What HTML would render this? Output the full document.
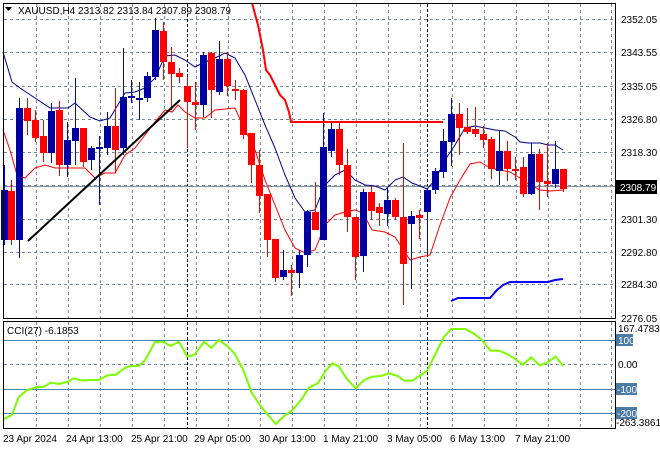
<!DOCTYPE html>
<html><head><meta charset="utf-8"><style>
html,body{margin:0;padding:0;background:#fff;}
svg{display:block;font-family:"Liberation Sans",sans-serif;}
</style></head><body>
<svg width="660" height="450" xmlns="http://www.w3.org/2000/svg">
<rect width="660" height="450" fill="#fff"/>
<!-- grid -->
<g stroke="#778899" stroke-width="1" stroke-dasharray="3,3" fill="none">
<path d="M4 19.5H615M4 52.5H615M4 86.5H615M4 119.5H615M4 152.5H615M4 185.5H615M4 219.5H615M4 252.5H615M4 284.5H615"/>
<path d="M36.5 4V318M68.5 4V318M100.5 4V318M132.5 4V318M164.5 4V318M196.5 4V318M228.5 4V318M260.5 4V318M292.5 4V318M324.5 4V318M356.5 4V318M388.5 4V318M420.5 4V318M452.5 4V318M484.5 4V318M516.5 4V318M548.5 4V318M580.5 4V318M611.5 4V318"/>
<path d="M36.5 322V428M68.5 322V428M100.5 322V428M132.5 322V428M164.5 322V428M196.5 322V428M228.5 322V428M260.5 322V428M292.5 322V428M324.5 322V428M356.5 322V428M388.5 322V428M420.5 322V428M452.5 322V428M484.5 322V428M516.5 322V428M548.5 322V428M580.5 322V428M611.5 322V428"/>
<path d="M4 364.5H615"/>
</g>
<g stroke="#000" stroke-dasharray="3,2"><path d="M187.5 4V318M427.5 4V318M187.5 322V428M427.5 322V428"/></g>
<!-- CCI levels -->
<g stroke="#4682b4"><path d="M4 340.5H615M4 389.5H615M4 413.5H615"/></g>
<!-- current price -->
<path d="M4 186.5H615" stroke="#8090a0"/>
<!-- bands -->
<polyline fill="none" stroke="#000080" stroke-width="1" points="3,52 12,82 20,88 35,98 50,108 68,108 75,103 90,117 100,121 110,118 125,93 135,92 145,88 155,78 165,56 175,55 185,60 195,67 205,62 215,58 225,53 235,58 245,75 255,100 265,125 275,148 285,175 295,198 305,212 315,210 325,185 335,175 345,170 355,180 365,185 375,186 385,190 395,180 403,177 412,183 420,186 427,189 435,180 445,160 455,145 465,128 475,126 485,128 495,130 505,131 515,137 520,142 528,143 540,143 548,145 555,145 563,150"/>
<polyline fill="none" stroke="#ff0000" stroke-width="1" points="3,130 10,150 17,175 25,178 35,168 45,165 55,168 65,168 75,168 85,168 95,178 105,173 115,173 125,155 135,148 145,135 155,122 165,110 172,112 178,105 185,112 195,118 205,118 215,110 235,108 245,130 255,150 265,180 275,205 285,230 295,248 305,253 315,250 325,225 335,215 345,212 355,210 363,213 372,230 385,232 395,237 410,260 420,257 430,255 440,225 450,198 460,180 470,164 480,162 490,168 500,170 510,172 520,178 530,185 540,190 550,191 563,190"/>
<!-- candles -->
<g id="c"></g>
<g stroke-width="1">
<g stroke="#0000ff" fill="#0000a0">
<path d="M4.5 165V245M19.5 98V258M51.5 103V163M67.5 122V177M75.5 78V165M91.5 146V170M99.5 136V205M107.5 112V155M123.5 48V155M131.5 80V103M139.5 82V120M147.5 72V102M155.5 18V80M203.5 52V117M219.5 41V95M283.5 250V280M299.5 250V288M307.5 210V267M323.5 113V240M331.5 122V157M363.5 189V272M387.5 188V226M411.5 211V289M427.5 188V255M435.5 168V194M443.5 129V178M451.5 98V166M499.5 130V185M531.5 143V195M555.5 141V188"/>
<g stroke="none">
<rect x="1" y="190" width="7" height="50"/><rect x="16" y="108" width="7" height="132"/><rect x="48" y="111" width="7" height="42"/><rect x="64" y="140" width="7" height="25"/><rect x="72" y="128" width="7" height="13"/><rect x="88" y="148" width="7" height="12"/><rect x="96" y="147" width="7" height="2"/><rect x="104" y="126" width="7" height="22"/><rect x="120" y="97" width="7" height="51"/><rect x="128" y="96" width="7" height="2"/><rect x="136" y="98" width="7" height="2"/><rect x="144" y="76" width="7" height="22"/><rect x="152" y="30" width="7" height="47"/><rect x="200" y="55" width="7" height="50"/><rect x="216" y="59" width="7" height="33"/><rect x="280" y="270" width="7" height="7"/><rect x="296" y="255" width="7" height="18"/><rect x="304" y="212" width="7" height="43"/><rect x="320" y="147" width="7" height="93"/><rect x="328" y="129" width="7" height="22"/><rect x="360" y="192" width="7" height="64"/><rect x="384" y="200" width="7" height="14"/><rect x="408" y="216" width="7" height="8"/><rect x="424" y="190" width="7" height="22"/><rect x="432" y="171" width="7" height="19"/><rect x="440" y="141" width="7" height="31"/><rect x="448" y="114" width="7" height="28"/><rect x="496" y="151" width="7" height="20"/><rect x="528" y="154" width="7" height="40"/><rect x="552" y="169" width="7" height="15"/>
</g></g>
<g stroke="#ff0000" fill="#ff0000">
<path d="M11.5 180V245M27.5 98V135M35.5 110V142M43.5 120V162M59.5 101V176M83.5 128V167M115.5 88V173M163.5 22V80M171.5 47V110M179.5 68V83M187.5 77V148M195.5 82V130M211.5 52V118M227.5 52V96M235.5 80V100M243.5 89V139M251.5 133V183M259.5 150V213M267.5 194V257M275.5 239V282M291.5 265V296M315.5 182V230M339.5 123V175M347.5 149V232M355.5 217V280M371.5 186V220M379.5 203V226M395.5 198V220M403.5 143V305M419.5 210V239M459.5 103V155M467.5 108V134M475.5 107V137M483.5 126V148M491.5 137V179M507.5 141V181M515.5 157V180M523.5 157V197M539.5 149V210M547.5 143V197M563.5 169V192"/>
<g stroke="none">
<rect x="8" y="191" width="7" height="49"/><rect x="24" y="108" width="7" height="13"/><rect x="32" y="120" width="7" height="18"/><rect x="40" y="136" width="7" height="17"/><rect x="56" y="110" width="7" height="55"/><rect x="80" y="128" width="7" height="34"/><rect x="112" y="126" width="7" height="24"/><rect x="160" y="31" width="7" height="31"/><rect x="168" y="62" width="7" height="12"/><rect x="176" y="73" width="7" height="4"/><rect x="184" y="86" width="7" height="16"/><rect x="192" y="102" width="7" height="3"/><rect x="208" y="53" width="7" height="37"/><rect x="224" y="59" width="7" height="27"/><rect x="232" y="89" width="7" height="2"/><rect x="240" y="90" width="7" height="45"/><rect x="248" y="133" width="7" height="32"/><rect x="256" y="165" width="7" height="31"/><rect x="264" y="194" width="7" height="46"/><rect x="272" y="239" width="7" height="39"/><rect x="288" y="270" width="7" height="3"/><rect x="312" y="212" width="7" height="18"/><rect x="336" y="129" width="7" height="36"/><rect x="344" y="165" width="7" height="52"/><rect x="352" y="217" width="7" height="40"/><rect x="368" y="192" width="7" height="19"/><rect x="376" y="207" width="7" height="6"/><rect x="392" y="200" width="7" height="17"/><rect x="400" y="217" width="7" height="47"/><rect x="416" y="215" width="7" height="3"/><rect x="456" y="114" width="7" height="14"/><rect x="464" y="127" width="7" height="5"/><rect x="472" y="129" width="7" height="5"/><rect x="480" y="134" width="7" height="6"/><rect x="488" y="139" width="7" height="30"/><rect x="504" y="151" width="7" height="18"/><rect x="512" y="169" width="7" height="2"/><rect x="520" y="167" width="7" height="27"/><rect x="536" y="154" width="7" height="28"/><rect x="544" y="181" width="7" height="3"/><rect x="560" y="169" width="7" height="20"/>
</g></g>
</g>
<!-- thick lines -->
<polyline fill="none" stroke="#ff0000" stroke-width="2" points="252,3 258,25 263,50 266,70 270,75 275,85 280,95 285,100 289,112 291,122 443,122"/>
<polyline fill="none" stroke="#0000ff" stroke-width="2" points="451,301 458,298 490,298 497,290 503,285 510,282 548,282 555,280 563,279"/>
<line x1="28" y1="241" x2="180" y2="100" stroke="#000" stroke-width="2"/>
<!-- CCI -->
<g transform="translate(0,300) scale(0.42092,0.33333)">
<polyline fill="none" stroke="#7cfc00" stroke-width="2" vector-effect="non-scaling-stroke" points="8,358 28,345 45,290 65,270 85,262 105,260 120,248 140,252 160,246 175,235 195,242 215,240 235,240 255,226 275,224 295,205 310,198 330,198 345,180 368,126 388,126 405,138 425,125 445,170 462,164 485,125 502,144 520,120 540,138 558,162 578,210 598,278 620,320 640,350 655,372 675,348 695,330 715,300 735,262 755,250 775,210 790,190 805,200 825,238 845,265 865,240 885,230 905,228 925,220 945,228 960,242 980,242 1000,225 1015,212 1035,160 1055,110 1072,87 1090,87 1105,87 1125,100 1145,120 1165,152 1185,152 1205,162 1225,178 1242,194 1262,172 1282,196 1300,188 1320,170 1338,198"/>
</g>
<!-- frames -->
<g stroke="#000" fill="none"><rect x="3.5" y="3.5" width="612" height="315"/><rect x="3.5" y="321.5" width="612" height="107"/></g>
<!-- header text -->
<path d="M5 7L12 7L8.5 11Z" fill="#000"/>
<text x="18" y="14" font-size="10" fill="#000">XAUUSD,H4  2313.82 2313.84 2307.89 2308.79</text>
<text x="7" y="334" font-size="10" fill="#000">CCI(27) -6.1853</text>
<!-- price axis -->
<g font-size="10" fill="#000">
<text x="621" y="23">2352.05</text><text x="621" y="56">2343.55</text><text x="621" y="90">2335.05</text><text x="621" y="123">2326.80</text><text x="621" y="156">2318.30</text><text x="621" y="189">2309.80</text><text x="621" y="223">2301.30</text><text x="621" y="256">2292.80</text><text x="621" y="288">2284.30</text><text x="621" y="322">2276.05</text>
</g>
<rect x="616" y="180" width="41" height="14" fill="#000"/>
<text x="620" y="191" font-size="10" fill="#fff">2308.79</text>
<g font-size="10">
<text x="618" y="332" fill="#000">167.4783</text>
<rect x="616" y="334" width="17" height="12" fill="#4a7aa5"/><text x="618" y="344" fill="#fff">100</text>
<text x="618" y="368" fill="#000">0.00</text>
<rect x="616" y="383" width="21" height="12" fill="#4a7aa5"/><text x="617" y="393" fill="#fff">-100</text>
<rect x="616" y="407" width="21" height="12" fill="#4a7aa5"/><text x="617" y="417" fill="#fff">-200</text>
<text x="616" y="426" fill="#000">-263.3861</text>
</g>
<!-- dates -->
<g font-size="10" fill="#000">
<text x="3" y="442">23 Apr 2024</text><text x="66" y="442">24 Apr 13:00</text><text x="131" y="442">25 Apr 21:00</text><text x="194" y="442">29 Apr 05:00</text><text x="259" y="442">30 Apr 13:00</text><text x="323" y="442">1 May 21:00</text><text x="387" y="442">3 May 05:00</text><text x="450" y="442">6 May 13:00</text><text x="515" y="442">7 May 21:00</text>
</g>
</svg>
</body></html>
